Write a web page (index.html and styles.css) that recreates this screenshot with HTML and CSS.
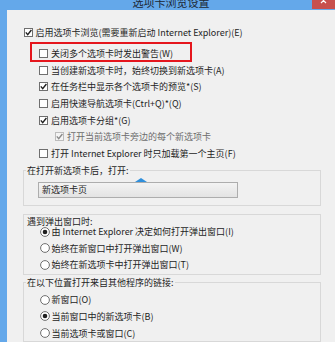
FILE: index.html
```html
<!DOCTYPE html>
<html lang="zh-CN">
<head>
<meta charset="utf-8">
<title>选项卡浏览设置</title>
<link rel="stylesheet" href="styles.css">
</head>
<body>
<div class="window">
  <div class="titlebar">
    <span class="title">选项卡浏览设置</span>
    <span class="close"><svg width="23" height="9" viewBox="0 0 23 9"><path d="M9 -2 L14 3 M14 -2 L9 3" stroke="#fff" stroke-width="1.2" fill="none"/></svg></span>
  </div>
  <div class="client">
    <div class="row lead">
      <svg class="cb" viewBox="0 0 9 9"><rect x="0.5" y="0.5" width="8" height="8" fill="#fff" stroke="#6f6f6f"/><path d="M1.8 4.4 L3.7 6.6 L7.4 2" stroke="#1f1f1f" stroke-width="1.4" fill="none"/></svg>
      <span>启用选项卡浏览(需要重新启动 Internet Explorer)(E)</span>
    </div>
    <div class="row l1 marked">
      <svg class="cb" viewBox="0 0 9 9"><rect x="0.5" y="0.5" width="8" height="8" fill="#fff" stroke="#6f6f6f"/></svg>
      <span>关闭多个选项卡时发出警告(W)</span>
    </div>
    <div class="row l1">
      <svg class="cb" viewBox="0 0 9 9"><rect x="0.5" y="0.5" width="8" height="8" fill="#fff" stroke="#6f6f6f"/></svg>
      <span>当创建新选项卡时，始终切换到新选项卡(A)</span>
    </div>
    <div class="row l1">
      <svg class="cb" viewBox="0 0 9 9"><rect x="0.5" y="0.5" width="8" height="8" fill="#fff" stroke="#6f6f6f"/><path d="M1.8 4.4 L3.7 6.6 L7.4 2" stroke="#1f1f1f" stroke-width="1.4" fill="none"/></svg>
      <span>在任务栏中显示各个选项卡的预览*(S)</span>
    </div>
    <div class="row l1">
      <svg class="cb" viewBox="0 0 9 9"><rect x="0.5" y="0.5" width="8" height="8" fill="#fff" stroke="#6f6f6f"/></svg>
      <span>启用快速导航选项卡(Ctrl+Q)*(Q)</span>
    </div>
    <div class="row l1">
      <svg class="cb" viewBox="0 0 9 9"><rect x="0.5" y="0.5" width="8" height="8" fill="#fff" stroke="#6f6f6f"/><path d="M1.8 4.4 L3.7 6.6 L7.4 2" stroke="#1f1f1f" stroke-width="1.4" fill="none"/></svg>
      <span>启用选项卡分组*(G)</span>
    </div>
    <div class="row l2 disabled">
      <svg class="cb" viewBox="0 0 9 9"><rect x="0.5" y="0.5" width="8" height="8" fill="#f4f4f4" stroke="#bcbcbc"/><path d="M1.8 4.4 L3.7 6.6 L7.4 2" stroke="#8a8a8a" stroke-width="1.4" fill="none"/></svg>
      <span>打开当前选项卡旁边的每个新选项卡</span>
    </div>
    <div class="row l1">
      <svg class="cb" viewBox="0 0 9 9"><rect x="0.5" y="0.5" width="8" height="8" fill="#fff" stroke="#6f6f6f"/></svg>
      <span>打开 Internet Explorer 时只加载第一个主页(F)</span>
    </div>

    <fieldset class="group g1">
      <legend>在打开新选项卡后，打开:</legend>
      <div class="body b1">
        <div class="select"><span>新选项卡页</span></div>
      </div>
    </fieldset>

    <div class="group g2">
      <div class="boxlabel">遇到弹出窗口时:</div>
      <div class="body b2">
        <div class="row">
          <svg class="rb" viewBox="0 0 10 10"><circle cx="5" cy="5" r="4.4" fill="#fff" stroke="#6f6f6f"/><circle cx="5" cy="5" r="2.3" fill="#1f1f1f"/></svg>
          <span>由 Internet Explorer 决定如何打开弹出窗口(I)</span>
        </div>
        <div class="row">
          <svg class="rb" viewBox="0 0 10 10"><circle cx="5" cy="5" r="4.4" fill="#fff" stroke="#6f6f6f"/></svg>
          <span>始终在新窗口中打开弹出窗口(W)</span>
        </div>
        <div class="row">
          <svg class="rb" viewBox="0 0 10 10"><circle cx="5" cy="5" r="4.4" fill="#fff" stroke="#6f6f6f"/></svg>
          <span>始终在新选项卡中打开弹出窗口(T)</span>
        </div>
      </div>
    </div>

    <fieldset class="group g3">
      <legend>在以下位置打开来自其他程序的链接:</legend>
      <div class="body b3">
        <div class="row">
          <svg class="rb" viewBox="0 0 10 10"><circle cx="5" cy="5" r="4.4" fill="#fff" stroke="#6f6f6f"/></svg>
          <span>新窗口(O)</span>
        </div>
        <div class="row">
          <svg class="rb" viewBox="0 0 10 10"><circle cx="5" cy="5" r="4.4" fill="#fff" stroke="#6f6f6f"/><circle cx="5" cy="5" r="2.3" fill="#1f1f1f"/></svg>
          <span>当前窗口中的新选项卡(B)</span>
        </div>
        <div class="row">
          <svg class="rb" viewBox="0 0 10 10"><circle cx="5" cy="5" r="4.4" fill="#fff" stroke="#6f6f6f"/></svg>
          <span>当前选项卡或窗口(C)</span>
        </div>
      </div>
    </fieldset>
  </div>
</div>
</body>
</html>
```

FILE: styles.css
```css
* { box-sizing: border-box; }
html, body { margin: 0; padding: 0; }
body {
  width: 335px;
  height: 342px;
  overflow: hidden;
  background: #f0f0f0;
  font-family: "Noto Sans CJK SC", "Noto Sans", sans-serif;
  font-size: 9px;
  color: #1e1e1e;
}
.window {
  display: flex;
  flex-direction: column;
  height: 342px;
}
.titlebar {
  height: 10px;
  flex: none;
  background: #64a8ea;
  display: grid;
  grid-template-columns: 1fr auto 1fr;
  align-items: start;
  padding-left: 7px;
  overflow: hidden;
}
.title {
  grid-column: 2;
  font-size: 11px;
  line-height: 4px;
  color: #1c2733;
}
.close {
  grid-column: 3;
  justify-self: end;
  width: 23px;
  height: 9px;
  background: #c8504d;
  display: block;
}
.close svg { display: block; }
.client {
  flex: 1;
  border-left: 7px solid #64a8ea;
  padding-top: 14.7px;
}
.row {
  display: flex;
  align-items: center;
  gap: 3px;
  height: 16.6px;
  white-space: nowrap;
}
.row.lead { margin-left: 16.5px; margin-bottom: 4.1px; }
.row.l1 { margin-left: 32px; }
.row.l2 { margin-left: 48px; }
.row.disabled { color: #6d6d6d; }
.cb { width: 9px; height: 9px; flex: none; }
.rb { width: 10px; height: 10px; flex: none; }
.group .row { gap: 1.5px; }
.marked { position: relative; }
.marked::after {
  content: "";
  position: absolute;
  left: -9px;
  top: -3.7px;
  width: 158px;
  height: 16.6px;
  border: 2.6px solid #e5161d;
}
.group {
  margin: 2px 14px 0 16px;
  padding: 0;
  border: 1px solid #d8d8d8;
  min-width: 0;
}
.group legend {
  margin-left: 2px;
  padding: 0 1px;
  font-size: 9px;
  line-height: 12px;
}
.boxlabel {
  padding-left: 3px;
  margin-top: 3px;
  line-height: 8px;
  white-space: nowrap;
}
.g1 { margin-top: 3.4px; }
.g2 { margin-top: 8px; }
.g3 { margin-top: 1.7px; }
.b1 { padding: 4.7px 0 7.3px 14px; }
.b2 { margin-top: -2.6px; padding: 0 0 0.8px 16px; }
.b3 { padding: 3px 0 0 16px; }
.select {
  position: relative;
  width: 200px;
  height: 16px;
  border: 1px solid #adadad;
  background: linear-gradient(#f3f3f3, #e3e3e3);
  padding-left: 3px;
  display: flex;
  align-items: center;
}
.select::before {
  content: "";
  position: absolute;
  left: 96px;
  top: -4.5px;
  border-left: 6.5px solid transparent;
  border-right: 6.5px solid transparent;
  border-bottom: 4px solid #2f8fdc;
}
```
